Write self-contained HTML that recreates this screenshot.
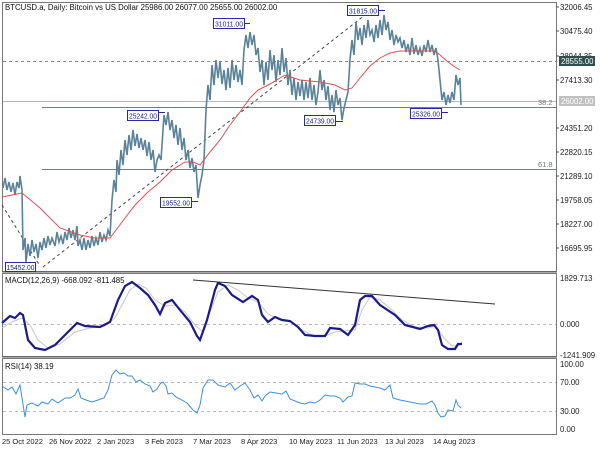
<!DOCTYPE html>
<html><head><meta charset="utf-8"><style>
html,body{margin:0;padding:0;background:#fff;}
svg{display:block;font-family:"Liberation Sans",sans-serif;}
</style></head><body>
<svg width="600" height="450" viewBox="0 0 600 450" xmlns="http://www.w3.org/2000/svg">
<rect width="600" height="450" fill="#fff"/>
<rect x="2.5" y="2.5" width="554" height="269" fill="none" stroke="#777" stroke-width="1"/>
<rect x="2.5" y="273.5" width="554" height="83" fill="none" stroke="#777" stroke-width="1"/>
<rect x="2.5" y="358.5" width="554" height="76" fill="none" stroke="#777" stroke-width="1"/>
<line x1="2" y1="272" x2="557" y2="272" stroke="#555"/>
<line x1="2" y1="357" x2="557" y2="357" stroke="#555"/>

<line x1="3" y1="61.5" x2="556" y2="61.5" stroke="#888" stroke-dasharray="3,3"/>
<line x1="3" y1="101.5" x2="556" y2="101.5" stroke="#bbb"/>
<line x1="42" y1="107.5" x2="556" y2="107.5" stroke="#6f7f7f"/>
<line x1="42" y1="169.5" x2="556" y2="169.5" stroke="#6f7f7f"/>
<text x="538" y="105" font-size="7.5" fill="#777">38.2</text>
<text x="538" y="167" font-size="7.5" fill="#777">61.8</text>

<line x1="2" y1="205" x2="40" y2="266" stroke="#444" stroke-dasharray="3,3"/>
<line x1="43" y1="267" x2="365" y2="15" stroke="#444" stroke-dasharray="3,3"/>

<polyline fill="none" stroke="#5a8399" stroke-width="1.6" points="
3,188 5,178 7,190 9,182 11,192 13,183 15,195 17,182 19,188 20,176 22,190 23,250 25,238 26,262 28,244 30,256 32,240 34,252 36,244 38,258 40,242 42,250 44,238 46,248 48,236 50,245 52,238 55,246 57,232 59,242 61,236 63,244 65,232 67,240 69,228 71,238 73,230 75,240 77,226 78,246 80,240 82,250 84,238 86,250 88,240 90,248 92,236 94,246 96,238 98,245 100,232 102,242 104,235 106,240 108,230 110,236 112,200 114,180 116,192 117,160 119,175 121,150 123,165 125,140 127,155 129,135 131,150 133,130 135,146 137,134 139,148 141,138 143,150 145,140 147,156 149,142 151,160 153,150 155,172 157,160 159,155 161,160 163,130 164,115 166,125 168,112 170,130 172,120 174,138 176,125 178,145 180,128 182,150 184,138 186,160 188,150 190,168 192,158 194,172 196,165 198,198 200,185 202,175 204,160 206,110 208,85 210,100 212,65 214,85 216,60 218,78 220,62 222,84 224,70 226,90 228,68 230,88 232,60 234,80 236,65 238,82 240,70 242,85 244,50 246,35 248,48 250,32 252,45 254,35 256,55 258,48 260,72 262,60 264,85 266,62 268,80 270,50 272,70 274,55 276,82 278,60 280,75 282,48 284,72 286,58 288,85 290,70 292,95 294,78 296,100 298,82 300,96 302,80 304,100 306,82 308,98 310,78 312,100 314,85 316,105 318,92 320,70 322,90 324,80 326,100 328,86 330,110 332,95 334,112 336,90 338,105 340,98 342,120 344,108 346,100 348,92 350,60 352,40 354,55 356,22 358,40 360,28 362,45 364,25 366,38 368,20 370,35 372,30 374,42 376,25 378,38 380,20 382,35 384,15 386,30 388,22 390,40 392,30 394,45 396,35 398,42 400,38 402,48 404,40 406,52 408,44 410,55 412,38 414,54 416,45 418,55 420,48 422,56 424,45 426,52 428,40 430,52 432,45 434,55 436,48 438,60 440,80 442,100 444,92 446,105 448,95 450,103 452,92 454,100 456,75 458,85 460,78 461,105"/>

<polyline fill="none" stroke="#e05050" stroke-width="1" points="2,197 22,193 40,208 60,228 80,235 95,238 110,238 122,222 135,205 148,192 160,182 172,170 185,162 193,162 200,165 210,152 220,140 230,125 240,112 250,98 258,90 270,84 285,75 300,80 320,82 335,85 345,90 352,88 360,78 370,66 380,58 390,53 400,51 420,51 435,51 440,55 448,62 455,67 460,70"/>

<g font-size="7.5" fill="#1a1a8a">
<rect x="213.5" y="18.5" width="31" height="10" fill="#fff" stroke="#2a2aa0"/><text x="215" y="26.5" textLength="28" lengthAdjust="spacingAndGlyphs">31011.00</text>
<line x1="244" y1="23.5" x2="250" y2="23.5" stroke="#2a2aa0"/>
<rect x="347.5" y="5.5" width="31" height="10" fill="#fff" stroke="#2a2aa0"/><text x="349" y="13.5" textLength="28" lengthAdjust="spacingAndGlyphs">31815.00</text>
<line x1="378" y1="10.5" x2="385" y2="10.5" stroke="#2a2aa0"/>
<rect x="127.5" y="110.5" width="31" height="10" fill="#fff" stroke="#2a2aa0"/><text x="129" y="118.5" textLength="28" lengthAdjust="spacingAndGlyphs">25242.00</text>
<line x1="158" y1="112.5" x2="165" y2="112.5" stroke="#2a2aa0"/>
<rect x="304.5" y="115.5" width="31" height="10" fill="#fff" stroke="#2a2aa0"/><text x="306" y="123.5" textLength="28" lengthAdjust="spacingAndGlyphs">24739.00</text>
<line x1="335" y1="121.5" x2="343" y2="121.5" stroke="#2a2aa0"/>
<rect x="410.5" y="108.5" width="31" height="10" fill="#fff" stroke="#2a2aa0"/><text x="412" y="116.5" textLength="28" lengthAdjust="spacingAndGlyphs">25326.00</text>
<line x1="441" y1="112.5" x2="448" y2="112.5" stroke="#2a2aa0"/>
<rect x="160.5" y="197.5" width="31" height="10" fill="#fff" stroke="#2a2aa0"/><text x="162" y="205.5" textLength="28" lengthAdjust="spacingAndGlyphs">19552.00</text>
<line x1="191" y1="201.5" x2="198" y2="201.5" stroke="#2a2aa0"/>
<rect x="5.5" y="262.5" width="30" height="9" fill="#fff" stroke="#2a2aa0"/><text x="6.5" y="270" textLength="28" lengthAdjust="spacingAndGlyphs">15452.00</text>
</g>

<text x="5" y="10" font-size="7.8" fill="#111">BTCUSD.a, Daily:  Bitcoin vs US Dollar  25986.00 26077.00 25655.00 26002.00</text>

<g font-size="7.8" fill="#222">
<text x="560" y="10">32006.45</text>
<text x="560" y="34">30475.40</text>
<text x="560" y="59">28944.35</text>
<text x="560" y="83">27413.30</text>
<text x="560" y="131">24351.20</text>
<text x="560" y="155">22820.15</text>
<text x="560" y="179">21289.10</text>
<text x="560" y="203">19758.05</text>
<text x="560" y="227">18227.00</text>
<text x="560" y="251">16695.95</text>
</g>
<g stroke="#555">
<line x1="556" y1="7" x2="559" y2="7"/><line x1="556" y1="31" x2="559" y2="31"/><line x1="556" y1="56" x2="559" y2="56"/><line x1="556" y1="80" x2="559" y2="80"/><line x1="556" y1="128" x2="559" y2="128"/><line x1="556" y1="152" x2="559" y2="152"/><line x1="556" y1="176" x2="559" y2="176"/><line x1="556" y1="200" x2="559" y2="200"/><line x1="556" y1="224" x2="559" y2="224"/><line x1="556" y1="248" x2="559" y2="248"/>
</g>
<rect x="559" y="56" width="36" height="10" fill="#2f4f4f"/>
<text x="561" y="64" font-size="7.8" fill="#fff">28555.00</text>
<rect x="559" y="96" width="36" height="10" fill="#c0c0c0"/>
<text x="561" y="104" font-size="7.8" fill="#fff">26002.00</text>

<line x1="3" y1="324.5" x2="556" y2="324.5" stroke="#bbb" stroke-dasharray="3,3"/>
<text x="5" y="283" font-size="7.8" fill="#111">MACD(12,26,9) -668.092 -811.485</text>
<line x1="193" y1="280" x2="495" y2="304" stroke="#333"/>
<polyline fill="none" stroke="#c8c8c8" stroke-width="1" points="2,328 12,322 22,318 30,325 38,340 48,348 60,344 75,332 90,328 105,326 115,318 122,305 130,290 138,284 146,288 155,300 165,306 175,305 185,312 195,325 203,332 210,312 218,292 228,285 238,290 248,298 258,302 268,314 280,320 292,322 302,330 312,335 325,336 335,332 345,331 355,330 362,310 370,297 380,300 392,310 402,320 415,327 428,328 436,326 444,338 452,346 458,346 462,342"/>
<polyline fill="none" stroke="#1a1a8a" stroke-width="2.2" points="2,323 10,316 15,318 20,313 23,315 28,340 35,348 45,350 55,345 65,335 77,323 85,326 100,327 110,322 118,300 125,286 132,282 140,288 148,295 155,305 160,314 165,303 172,300 180,310 190,322 197,336 200,340 207,320 215,290 218,283 225,286 232,295 243,302 252,296 258,300 262,315 268,322 275,317 282,320 290,321 298,327 305,335 315,336 325,336 330,328 340,329 348,335 355,325 360,300 365,296 372,296 380,305 395,315 405,325 420,329 428,326 434,325 438,330 442,345 448,349 455,349 458,344 462,344"/>
<g font-size="7.8" fill="#222">
<text x="560" y="281">1829.713</text>
<text x="560" y="327">0.000</text>
<text x="560" y="358">-1241.909</text>
</g>

<line x1="3" y1="382.5" x2="556" y2="382.5" stroke="#bbb" stroke-dasharray="3,3"/>
<line x1="3" y1="411.5" x2="556" y2="411.5" stroke="#bbb" stroke-dasharray="3,3"/>
<text x="5" y="369" font-size="7.8" fill="#111">RSI(14) 38.19</text>
<polyline fill="none" stroke="#3d8fe0" stroke-width="1" points="2,386 8,390 12,387 16,394 20,385 22,398 25,417 27,405 32,403 38,406 42,402 48,404 52,399 58,403 65,398 70,398 75,395 78,389 81,398 86,400 92,402 98,400 104,398 108,390 112,375 116,370 120,374 124,373 128,376 132,376 136,382 140,380 145,384 150,386 153,392 157,389 160,384 163,382 166,386 168,394 172,393 176,397 180,399 187,403 193,410 197,413 200,405 203,388 208,380 213,380 218,385 225,387 230,383 235,390 240,386 245,383 250,390 254,398 258,395 262,401 265,396 270,392 276,393 282,394 286,391 290,399 295,401 300,403 305,404 310,402 315,403 320,400 325,395 330,396 335,396 340,398 343,402 348,397 352,396 355,383 360,384 365,384 370,386 375,387 380,388 385,390 390,385 393,398 400,400 410,402 420,404 426,404 432,401 435,405 438,413 441,417 445,416 448,410 453,411 456,400 458,405 461,408"/>
<g font-size="7.8" fill="#222">
<text x="560" y="367">100.00</text>
<text x="560" y="385">70.00</text>
<text x="560" y="414">30.00</text>
<text x="560" y="432">0.00</text>
</g>

<g font-size="7.5" fill="#222">
<text x="2" y="444">25 Oct 2022</text>
<text x="49" y="444">26 Nov 2022</text>
<text x="97" y="444">2 Jan 2023</text>
<text x="145" y="444">3 Feb 2023</text>
<text x="193" y="444">7 Mar 2023</text>
<text x="241" y="444">8 Apr 2023</text>
<text x="289" y="444">10 May 2023</text>
<text x="337" y="444">11 Jun 2023</text>
<text x="385" y="444">13 Jul 2023</text>
<text x="433" y="444">14 Aug 2023</text>
</g>
</svg>
</body></html>
